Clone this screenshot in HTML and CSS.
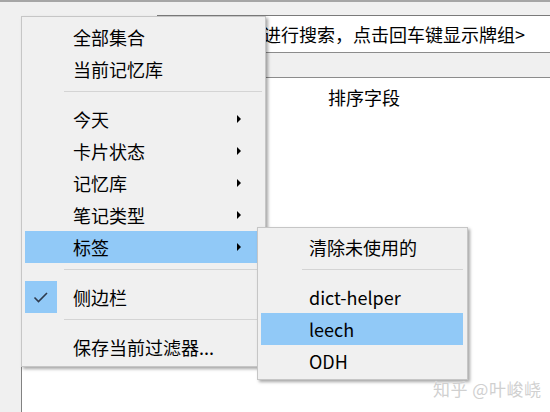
FILE: index.html
```html
<!DOCTYPE html>
<html>
  <head>
    <meta charset="utf-8" />
    <link rel="stylesheet" href="styles.css">
  </head>

  <body>
    <div id="window">
      <div class="topline"></div>

      <div class="toolbar">
        <div class="search">&lt;在此输入进行搜索，点击回车键显示牌组&gt;</div>
      </div>

      <div class="table">
        <div class="thead"></div>
        <div class="row">
          <span class="col">排序字段</span>
        </div>
      </div>
    </div>

    <!-- context menu -->
    <div class="menu main-menu">
      <div class="item"><span class="icon"></span>全部集合</div>
      <div class="item"><span class="icon"></span>当前记忆库</div>
      <div class="sep"></div>
      <div class="item"><span class="icon"></span>今天<i class="arrow"></i></div>
      <div class="item"><span class="icon"></span>卡片状态<i class="arrow"></i></div>
      <div class="item"><span class="icon"></span>记忆库<i class="arrow"></i></div>
      <div class="item"><span class="icon"></span>笔记类型<i class="arrow"></i></div>
      <div class="item active"><span class="icon"></span>标签<i class="arrow"></i></div>
      <div class="sep"></div>
      <div class="item">
        <span class="icon checked">
          <svg width="32" height="32" viewBox="0 0 32 32">
            <path d="M9.5 16.5 L13.5 20.5 L22 12" fill="none" stroke="#2f3b4d" stroke-width="1.6" />
          </svg>
        </span>侧边栏
      </div>
      <div class="sep"></div>
      <div class="item"><span class="icon"></span>保存当前过滤器...</div>
    </div>

    <div class="menu sub-menu">
      <div class="item"><span class="icon"></span>清除未使用的</div>
      <div class="sep"></div>
      <div class="item"><span class="icon"></span>dict-helper</div>
      <div class="item active"><span class="icon"></span>leech</div>
      <div class="item"><span class="icon"></span>ODH</div>
    </div>

    <div class="watermark">知乎 @叶峻峣</div>
  </body>
</html>
```

FILE: styles.css
```css
body {
  background-color: #f0f0f0;
  color: #000;
  font-family: "Noto Sans CJK SC", sans-serif;
  font-size: 18px;
  margin: 0;
  padding: 0;
  width: 550px;
  height: 412px;
  overflow: hidden;
}

#window {
  height: 412px;
  display: flex;
  flex-direction: column;
}

.topline {
  height: 2px;
  background-color: #a6a6a6;
}

.toolbar {
  padding: 13px 0 0 157px;
}

.search {
  height: 36px;
  line-height: 36px;
  background-color: #fff;
  border-top: 1px solid #7a7a7a;
  border-left: 1px solid #7a7a7a;
  padding-left: 23px;
  white-space: nowrap;
  overflow: hidden;
}

.table {
  flex: 1;
  margin-left: 21px;
  border-left: 1px solid #828282;
  background-color: #fff;
}

.thead {
  height: 24px;
  background-color: #f0f0f0;
  border-top: 1px solid #8c8c8c;
  border-bottom: 1px solid #8c8c8c;
}

.row {
  padding: 7px 0 0 306px;
  line-height: 24px;
}

/* menus */
.menu {
  position: absolute;
  box-sizing: border-box;
  background-color: #f0f0f0;
  border: 1px solid #c6c6c6;
  box-shadow: 2px 2px 3px rgba(0, 0, 0, 0.35);
}

.main-menu {
  left: 21px;
  top: 16px;
  width: 245px;
  padding: 4px 3px 3px 3px;
}

.sub-menu {
  left: 257px;
  top: 227px;
  width: 211px;
  padding: 3px 4px 2px 3px;
}

.item {
  display: flex;
  align-items: center;
  height: 32px;
  line-height: 32px;
  white-space: nowrap;
}

.item.active {
  background-color: #91c9f7;
}

.icon {
  width: 32px;
  height: 32px;
  margin-right: 16px;
  flex: none;
}

.icon.checked {
  background-color: #91c9f7;
}

.icon svg {
  display: block;
}

.arrow {
  margin-left: auto;
  margin-right: 21px;
  width: 0;
  height: 0;
  border-left: 4px solid #000;
  border-top: 4px solid transparent;
  border-bottom: 4px solid transparent;
}

.sep {
  box-sizing: border-box;
  height: 18px;
  padding: 6px 0 0 39px;
}

.sep::after {
  content: "";
  display: block;
  border-top: 1px solid #d4d4d4;
}

.sub-menu .sep {
  padding-left: 41px;
}

.watermark {
  position: absolute;
  left: 433px;
  top: 376px;
  font-size: 17px;
  color: #d0d0d0;
  text-shadow: 0 0 1px #fff;
  letter-spacing: 0.5px;
}
```
